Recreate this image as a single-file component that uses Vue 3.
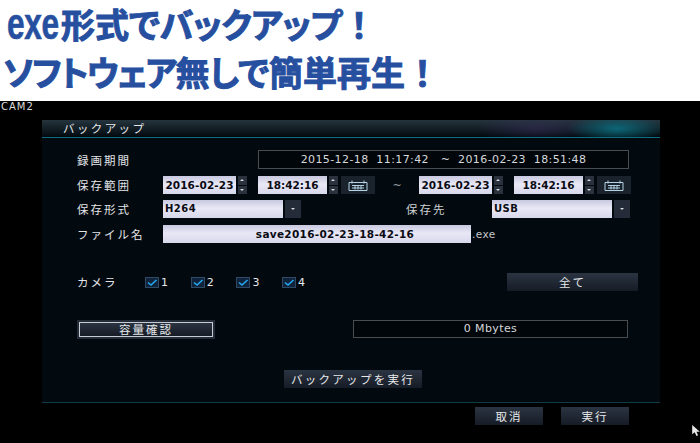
<script setup>
const cameras = [1, 2, 3, 4]
const period = '2015-12-18  11:17:42   ~  2016-02-23  18:51:48'
</script>

<template>
  <div class="page">
    <header class="banner">
      <h1 class="line first"><span class="latin">exe</span>形式で<span class="kana1">バックアップ</span><span class="bang">！</span></h1>
      <h1 class="line second"><span class="kana2">ソフトウェア</span>無しで簡単再生<span class="bang">！</span></h1>
    </header>
    <main class="screen">
      <div class="cam">CAM2</div>
      <section class="dialog">
        <div class="title"><span>バックアップ</span></div>
        <div class="body">
          <div class="row period">
            <label class="lbl">録画期間</label>
            <div class="outline">{{ period }}</div>
          </div>
          <div class="row range">
            <label class="lbl">保存範囲</label>
            <div class="input date">2016-02-23</div>
            <div class="spin"><i class="up"></i><i class="down"></i></div>
            <div class="input time">18:42:16</div>
            <div class="spin"><i class="up"></i><i class="down"></i></div>
            <button class="cal">
              <svg width="20" height="11" viewBox="0 0 20 11"><path d="M1 2.5H19V10.5H1Z M4 0.5V3.5 M16 0.5V3.5 M4 5.5H16 M4 8H16 M7 5V9.5 M10 5V9.5 M13 5V9.5" fill="none" stroke="#b5d3e6" stroke-width="1"/></svg>
            </button>
            <span class="tilde">~</span>
            <div class="input date">2016-02-23</div>
            <div class="spin"><i class="up"></i><i class="down"></i></div>
            <div class="input time">18:42:16</div>
            <div class="spin"><i class="up"></i><i class="down"></i></div>
            <button class="cal">
              <svg width="20" height="11" viewBox="0 0 20 11"><path d="M1 2.5H19V10.5H1Z M4 0.5V3.5 M16 0.5V3.5 M4 5.5H16 M4 8H16 M7 5V9.5 M10 5V9.5 M13 5V9.5" fill="none" stroke="#b5d3e6" stroke-width="1"/></svg>
            </button>
          </div>
          <div class="row format">
            <label class="lbl">保存形式</label>
            <div class="input select">H264</div>
            <div class="drop"><i></i></div>
            <label class="lbl dest">保存先</label>
            <div class="input select">USB</div>
            <div class="drop"><i></i></div>
          </div>
          <div class="row file">
            <label class="lbl">ファイル名</label>
            <div class="input name">save2016-02-23-18-42-16</div>
            <span class="ext">.exe</span>
          </div>
          <div class="row camera">
            <label class="lbl">カメラ</label>
            <div class="checks">
              <div v-for="c in cameras" :key="c" class="check">
                <svg class="box" width="14" height="11" viewBox="0 0 14 11"><rect x="0.5" y="0.5" width="13" height="10" fill="#10233a" stroke="#2f4a66"/><path d="M3 5.5L6 8L11.5 3" fill="none" stroke="#25a8f0" stroke-width="1.6"/></svg>
                <span>{{ c }}</span>
              </div>
            </div>
            <button class="btn all">全て</button>
          </div>
          <div class="row capacity">
            <button class="btn focus">容量確認</button>
            <div class="outline mb">0 Mbytes</div>
          </div>
          <div class="row run">
            <button class="btn exec">バックアップを実行</button>
          </div>
        </div>
      </section>
      <footer class="actions">
        <button class="btn act">取消</button>
        <button class="btn act">実行</button>
      </footer>
      <svg class="cursor" width="8" height="11" viewBox="0 0 9 13"><path d="M0 0V11L3 8.5L5 13L7 12L5 8H9Z" fill="#e8e8e8"/></svg>
    </main>
  </div>
</template>

<style>
html, body { margin: 0; background: #000; }
</style>

<style scoped>
.page { width: 700px; height: 443px; overflow: hidden; font-family: "Noto Sans CJK JP", "Noto Sans", sans-serif; }
.banner { height: 101px; background: #fff; box-sizing: border-box; padding: 0 0 0 3px; }
.line { margin: 0; color: #274f9f; font-size: 34px; line-height: 48px; font-weight: 700; -webkit-text-stroke: 1px #274f9f; white-space: nowrap; font-feature-settings: "palt"; }
.first { padding-left: 4px; }
.latin { display: inline-block; width: 54px; font: bold 44px/48px "Liberation Sans", sans-serif; -webkit-text-stroke: 0.6px #274f9f; transform: scaleX(.72); transform-origin: left center; vertical-align: top; letter-spacing: -0.5px; }
.kana1 { letter-spacing: -0.5px; }
.kana2 { letter-spacing: -1.8px; }
.bang { margin-left: 9px; }

.screen { position: relative; height: 342px; background: #000; color: #e6e8ec; }
.cam { height: 19px; padding-left: 1px; font: 10px/11px "DejaVu Sans", sans-serif; color: #dcdcdc; letter-spacing: 1px; }
.dialog { margin-left: 42px; width: 618px; background: #020a0f; }
.title { height: 18px; box-sizing: border-box; border-bottom: 1px solid #0f6f80; padding-left: 21px; font-size: 11.5px; line-height: 17px; letter-spacing: 2.4px; color: #e4e6e8;
  background: radial-gradient(ellipse 50px 14px at 93% 50%, rgba(10, 120, 140, .8), transparent), radial-gradient(ellipse 60px 14px at 80% 50%, rgba(70, 50, 110, .4), transparent), linear-gradient(#25343d, #01090e); }
.body { height: 265px; box-sizing: border-box; padding: 12px 0 0 35px; border-bottom: 1px solid #0f3a46; }
.row { display: flex; align-items: center; }
.lbl { width: 86px; flex: none; font-size: 11.5px; letter-spacing: 2px; color: #e2e4e8; white-space: nowrap; }

.period { height: 19px; }
.outline { box-sizing: border-box; border: 1px solid #4a4d50; background: #01060a; color: #d6d8da; font: 11px/17px "DejaVu Sans", sans-serif; text-align: center; letter-spacing: 0.4px; white-space: pre; }
.period .outline { margin-left: 95px; width: 371px; height: 19px; }

.range { height: 18px; margin-top: 7px; }
.input { box-sizing: border-box; height: 18px; background: linear-gradient(#c8c8e0, #e8e8f6 45%, #d8d8ec); color: #0b0b12; font: bold 10.5px/18px "DejaVu Sans", sans-serif; }
.date { width: 73px; text-align: center; letter-spacing: 0.1px; white-space: nowrap; overflow: hidden; }
.time { width: 69px; margin-left: 11px; text-align: center; white-space: nowrap; }
.spin { width: 9px; height: 18px; margin-left: 2px; display: flex; flex-direction: column; gap: 1px; }
.spin i { flex: 1; background: #2a323e; position: relative; }
.spin i::after { content: ""; position: absolute; left: 2px; top: 3px; border-left: 2.5px solid transparent; border-right: 2.5px solid transparent; }
.spin .up::after { border-bottom: 2px solid #d5d8dc; }
.spin .down::after { border-top: 2px solid #d5d8dc; }
.cal { width: 34px; height: 18px; margin-left: 3px; padding: 0; border: 0; background: #1a222c; display: flex; align-items: center; justify-content: center; }
.tilde { width: 44px; flex: none; text-align: center; color: #9a9ea2; font: 11px "DejaVu Sans", sans-serif; }

.format { height: 18px; margin-top: 6px; }
.select { width: 120px; padding-left: 2px; letter-spacing: 0.5px; font-size: 10px; font-weight: 700; }
.drop { width: 16px; height: 18px; margin-left: 2px; background: #232c38; display: flex; align-items: center; justify-content: center; }
.drop i { border-left: 2.5px solid transparent; border-right: 2.5px solid transparent; border-top: 2.5px solid #d5d8dc; }
.dest { margin-left: 105px; color: #cfd1d4; }

.file { height: 18px; margin-top: 7px; }
.name { width: 308px; text-align: center; letter-spacing: 0.3px; padding-left: 36px; }
.ext { font: 10.5px "DejaVu Sans", sans-serif; color: #c4c6c8; margin-left: 1px; letter-spacing: 0.4px; }

.camera { height: 18px; margin-top: 30px; }
.camera .lbl { width: 68px; }
.checks { display: flex; width: 362px; }
.check { width: 45.7px; display: flex; align-items: center; gap: 2px; font: 11px "DejaVu Sans", sans-serif; }
.btn { box-sizing: border-box; height: 18px; padding: 0; border: 0; font-family: inherit; font-size: 11.5px; line-height: 18px; letter-spacing: 2px; color: #e6e8ea; background: linear-gradient(#2b3442, #161c26); }
.all { width: 131px; }

.capacity { height: 18px; margin-top: 29px; }
.focus { width: 134px; height: 15px; border: 1px solid #c8ccd0; outline: 2px solid #232c38; margin: 0 2px; line-height: 13px; }
.mb { margin-left: 138px; width: 275px; height: 18px; line-height: 16px; }

.run { height: 18px; margin-top: 32px; padding-left: 207px; }
.exec { width: 138px; letter-spacing: 2.3px; }

.actions { display: flex; gap: 18px; margin: 4px 0 0 475px; }
.act { width: 68px; }
.cursor { position: absolute; right: 0; top: 324px; }
</style>
